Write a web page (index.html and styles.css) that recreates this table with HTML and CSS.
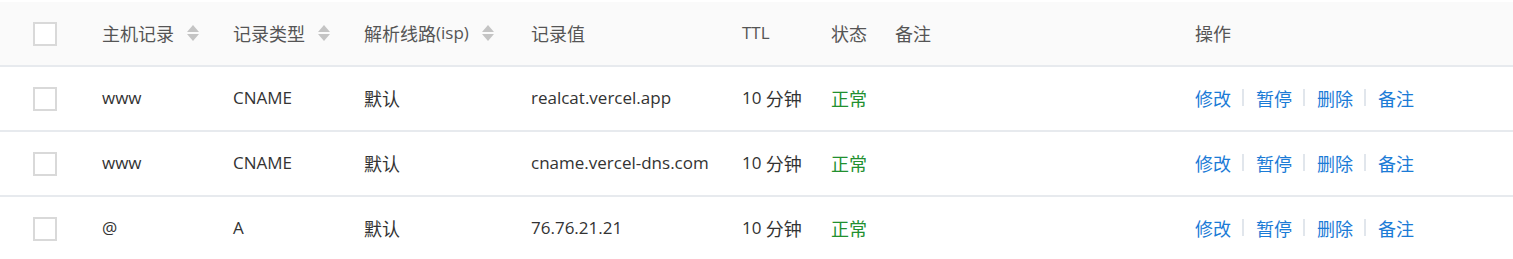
FILE: index.html
```html
<!DOCTYPE html>
<html lang="zh-CN">
<head>
<meta charset="utf-8">
<title>解析记录</title>
<link rel="stylesheet" href="styles.css">
</head>
<body>
<div class="table">
  <div class="row head">
    <div class="cell c-check"><span class="checkbox"></span></div>
    <div class="cell c-host"><span class="zh">主机记录</span><span class="sort"><i class="up"></i><i class="down"></i></span></div>
    <div class="cell c-type"><span class="zh">记录类型</span><span class="sort"><i class="up"></i><i class="down"></i></span></div>
    <div class="cell c-isp"><span class="zh">解析线路</span>(isp)<span class="sort"><i class="up"></i><i class="down"></i></span></div>
    <div class="cell c-value"><span class="zh">记录值</span></div>
    <div class="cell c-ttl">TTL</div>
    <div class="cell c-status"><span class="zh">状态</span></div>
    <div class="cell c-note"><span class="zh">备注</span></div>
    <div class="cell c-ops"><span class="zh">操作</span></div>
  </div>
  <div class="row">
    <div class="cell c-check"><span class="checkbox"></span></div>
    <div class="cell c-host">www</div>
    <div class="cell c-type">CNAME</div>
    <div class="cell c-isp"><span class="zh">默认</span></div>
    <div class="cell c-value">realcat.vercel.app</div>
    <div class="cell c-ttl">10&nbsp;<span class="zh">分钟</span></div>
    <div class="cell c-status ok"><span class="zh">正常</span></div>
    <div class="cell c-note"></div>
    <div class="cell c-ops"><a class="zh">修改</a><span class="sep"></span><a class="zh">暂停</a><span class="sep"></span><a class="zh">删除</a><span class="sep"></span><a class="zh">备注</a></div>
  </div>
  <div class="row">
    <div class="cell c-check"><span class="checkbox"></span></div>
    <div class="cell c-host">www</div>
    <div class="cell c-type">CNAME</div>
    <div class="cell c-isp"><span class="zh">默认</span></div>
    <div class="cell c-value">cname.vercel-dns.com</div>
    <div class="cell c-ttl">10&nbsp;<span class="zh">分钟</span></div>
    <div class="cell c-status ok"><span class="zh">正常</span></div>
    <div class="cell c-note"></div>
    <div class="cell c-ops"><a class="zh">修改</a><span class="sep"></span><a class="zh">暂停</a><span class="sep"></span><a class="zh">删除</a><span class="sep"></span><a class="zh">备注</a></div>
  </div>
  <div class="row last">
    <div class="cell c-check"><span class="checkbox"></span></div>
    <div class="cell c-host">@</div>
    <div class="cell c-type">A</div>
    <div class="cell c-isp"><span class="zh">默认</span></div>
    <div class="cell c-value">76.76.21.21</div>
    <div class="cell c-ttl">10&nbsp;<span class="zh">分钟</span></div>
    <div class="cell c-status ok"><span class="zh">正常</span></div>
    <div class="cell c-note"></div>
    <div class="cell c-ops"><a class="zh">修改</a><span class="sep"></span><a class="zh">暂停</a><span class="sep"></span><a class="zh">删除</a><span class="sep"></span><a class="zh">备注</a></div>
  </div>
</div>
</body>
</html>
```
FILE: styles.css
```css
html, body {
  margin: 0;
  padding: 0;
  background: #fff;
}
body {
  font-family: "Open Sans", "Noto Sans CJK SC", sans-serif;
  font-size: 17px;
  color: #333;
  padding-top: 2px;
}
.zh {
  font-family: "Noto Sans CJK SC", sans-serif;
  font-size: 18px;
}
.table {
  width: 1513px;
}
.row {
  display: flex;
  align-items: center;
  height: 63px;
  border-bottom: 2px solid #e7eaee;
}
.row.last {
  border-bottom: none;
}
.row.head {
  background: #fafafa;
  color: #555;
}
.cell {
  display: flex;
  align-items: center;
  white-space: nowrap;
  flex: none;
  padding-bottom: 2px;
}
.c-check { width: 69px; padding-left: 33px; padding-bottom: 0; }
.c-host { width: 131px; }
.c-type { width: 131px; }
.c-isp { width: 167px; }
.c-value { width: 211px; }
.c-ttl { width: 89px; }
.c-status { width: 64px; }
.c-note { width: 300px; }
.c-ops { flex: 1; }
.checkbox {
  display: block;
  width: 20px;
  height: 20px;
  border: 2px solid #d9d9d9;
  background: #fff;
}
.sort {
  display: flex;
  flex-direction: column;
  gap: 2px;
  margin-left: 13px;
}
.sort i {
  display: block;
  width: 0;
  height: 0;
  border-left: 6px solid transparent;
  border-right: 6px solid transparent;
}
.sort .up { border-bottom: 7px solid #c4c4c4; }
.sort .down { border-top: 7px solid #c4c4c4; }
.ok { color: #22902f; }
.c-ops a {
  color: #1b7bd6;
  cursor: pointer;
}
.sep {
  display: block;
  width: 2px;
  height: 17px;
  background: #e1e6ec;
  margin: 0 12px 0 11px;
}
```
